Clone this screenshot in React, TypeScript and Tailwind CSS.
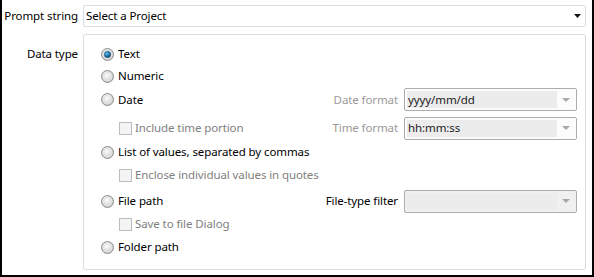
import React from "react";

const font = { fontFamily: '"Noto Sans", "Open Sans", sans-serif' };

function Radio({ checked }: { checked?: boolean }) {
  return (
    <svg width="13" height="13" viewBox="0 0 13 13" className="shrink-0">
      <defs>
        <radialGradient id="rg" cx="0.45" cy="0.4" r="0.6">
          <stop offset="0" stopColor="#fdfdfd" />
          <stop offset="1" stopColor="#c9c9c9" />
        </radialGradient>
        <radialGradient id="dot" cx="0.4" cy="0.35" r="0.7">
          <stop offset="0" stopColor="#6ec2f0" />
          <stop offset="0.6" stopColor="#1a6fa6" />
          <stop offset="1" stopColor="#0b3a5c" />
        </radialGradient>
      </defs>
      <circle cx="6.5" cy="6.5" r="6" fill="url(#rg)" stroke="#8f8f8f" strokeWidth="1" />
      <circle cx="6.5" cy="6.5" r="4.2" fill="none" stroke="#e6e6e6" strokeWidth="1" />
      {checked && <circle cx="6.5" cy="6.5" r="3.2" fill="url(#dot)" stroke="#2d5f80" strokeWidth="0.6" />}
    </svg>
  );
}

function Check() {
  return <span className="inline-block w-[13px] h-[13px] shrink-0 border border-[#bcbcbc] bg-[#f4f4f4]" />;
}

function Combo({ value, grayFull }: { value?: string; grayFull?: boolean }) {
  return (
    <div
      className={`w-[173px] h-[23px] border border-[#acacac] rounded-[2px] flex items-center p-[2px] ${grayFull ? "bg-[#f0f0f0]" : "bg-[#fcfcfc]"}`}
    >
      <div className="w-[150px] h-full flex items-center pl-[1px] text-[#1a1a1a] bg-[#ececec]">{value}</div>
      <div className="flex-1 flex justify-center items-center">
        <svg width="8" height="4" viewBox="0 0 8 4">
          <path d="M0 0 H8 L4 4 Z" fill="#a8a8a8" />
        </svg>
      </div>
    </div>
  );
}

function Row({ h, mt, children, right }: { h: number; mt?: number; children: React.ReactNode; right?: React.ReactNode }) {
  return (
    <div className="flex items-center" style={{ height: h, marginTop: mt ?? 0 }}>
      <div className="flex-1 flex items-center">{children}</div>
      {right}
    </div>
  );
}

export default function App() {
  return (
    <div
      className="w-[594px] h-[277px] bg-white border-x-2 border-b-2 border-black text-[11.5px] tracking-[-0.1px] text-black whitespace-nowrap"
      style={font}
    >
      <div className="grid grid-cols-[76px_1fr] gap-x-[5px] pt-[5px] pr-[6px]">
        <div className="h-[22px] flex items-center justify-end">Prompt string</div>
        <div className="h-[22px] border border-[#d6dde3] rounded-[2px] flex items-center pl-[2px] pr-[4px]">
          <span className="flex-1">Select a Project</span>
          <svg width="7" height="4" viewBox="0 0 7 4">
            <path d="M0 0 H7 L3.5 4 Z" fill="#111" />
          </svg>
        </div>

        <div className="mt-[7px] pt-[11px] flex justify-end">
          <span className="h-[18px] flex items-center">Data type</span>
        </div>
        <div className="mt-[7px] h-[236px] w-[503px] border border-[#d6dde3] rounded-[3px] pt-[9px] pl-[17px] pr-[8px]">
          <Row h={20}>
            <Radio checked />
            <span className="ml-[4px]">Text</span>
          </Row>
          <Row h={24}>
            <Radio />
            <span className="ml-[4px]">Numeric</span>
          </Row>
          <Row
            h={23}
            right={
              <div className="flex items-center gap-[6px]">
                <span className="text-[#9a9a9a]">Date format</span>
                <Combo value="yyyy/mm/dd" />
              </div>
            }
          >
            <Radio />
            <span className="ml-[4px]">Date</span>
          </Row>
          <Row
            h={24}
            mt={5}
            right={
              <div className="flex items-center gap-[6px]">
                <span className="text-[#9a9a9a]">Time format</span>
                <Combo value="hh:mm:ss" />
              </div>
            }
          >
            <span className="ml-[18px]" />
            <Check />
            <span className="ml-[3px] text-[#808080]">Include time portion</span>
          </Row>
          <Row h={24}>
            <Radio />
            <span className="ml-[4px]">List of values, separated by commas</span>
          </Row>
          <Row h={22}>
            <span className="ml-[18px]" />
            <Check />
            <span className="ml-[3px] text-[#808080]">Enclose individual values in quotes</span>
          </Row>
          <Row
            h={24}
            mt={3}
            right={
              <div className="flex items-center gap-[6px]">
                <span>File-type filter</span>
                <Combo grayFull />
              </div>
            }
          >
            <Radio />
            <span className="ml-[4px]">File path</span>
          </Row>
          <Row h={22}>
            <span className="ml-[18px]" />
            <Check />
            <span className="ml-[3px] text-[#808080]">Save to file Dialog</span>
          </Row>
          <Row h={24}>
            <Radio />
            <span className="ml-[4px]">Folder path</span>
          </Row>
        </div>
      </div>
    </div>
  );
}
